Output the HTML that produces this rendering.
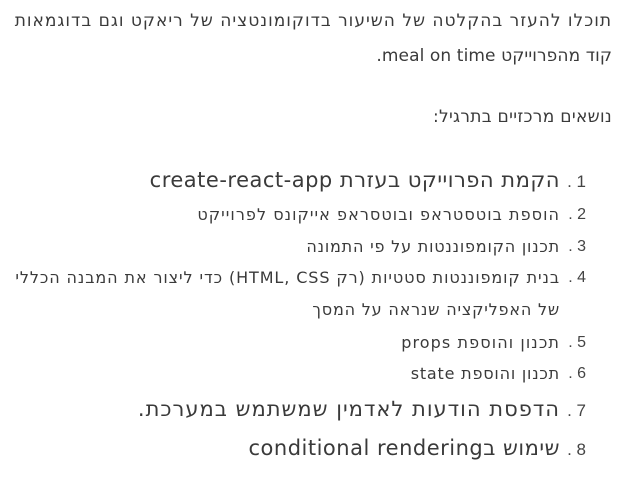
<!DOCTYPE html>
<html><head><meta charset="utf-8"><style>
body{margin:0;width:638px;height:486px;background:#fff;overflow:hidden;font-family:"DejaVu Sans","Liberation Sans",sans-serif;color:#3a3a3a;position:relative}
.l{position:absolute;direction:rtl;white-space:nowrap;line-height:1}
.p{right:26px;font-size:17px}
.n{position:absolute;right:52px;direction:ltr;white-space:nowrap;line-height:1;color:#444;font-family:"Liberation Sans",sans-serif}
.t{right:78px}
.s{font-size:16px;letter-spacing:0.8px}
</style></head><body>
<div class="l p" style="top:13px;letter-spacing:1px">תוכלו להעזר בהקלטה של השיעור בדוקומונטציה של ריאקט וגם בדוגמאות</div>
<div class="l p" style="top:48px;letter-spacing:0.1px">קוד מהפרוייקט meal on time.</div>
<div class="l p" style="top:109px;letter-spacing:0.3px">נושאים מרכזיים בתרגיל:</div>

<div class="n" style="top:173px;font-size:17px">. 1</div>
<div class="l t" style="top:170px;font-size:21px;letter-spacing:0.5px">הקמת הפרוייקט בעזרת create-react-app</div>
<div class="n" style="top:207px;font-size:16px">. 2</div>
<div class="l t s" style="top:207px;letter-spacing:1.05px">הוספת בוטסטראפ ובוטסראפ אייקונס לפרוייקט</div>
<div class="n" style="top:239px;font-size:16px">. 3</div>
<div class="l t s" style="top:239px">תכנון הקומפוננטות על פי התמונה</div>
<div class="n" style="top:270px;font-size:16px">. 4</div>
<div class="l t s" style="top:270px;letter-spacing:0.9px">בנית קומפוננטות סטטיות (רק HTML, CSS) כדי ליצור את המבנה הכללי</div>
<div class="l t s" style="top:302px">של האפליקציה שנראה על המסך</div>
<div class="n" style="top:335px;font-size:16px">. 5</div>
<div class="l t s" style="top:335px;letter-spacing:1.1px">תכנון והוספת props</div>
<div class="n" style="top:366px;font-size:16px">. 6</div>
<div class="l t s" style="top:366px">תכנון והוספת state</div>
<div class="n" style="top:402px;font-size:17px">. 7</div>
<div class="l t" style="top:399px;font-size:21px;letter-spacing:1px">הדפסת הודעות לאדמין שמשתמש במערכת.</div>
<div class="n" style="top:441px;font-size:17px">. 8</div>
<div class="l t" style="top:438px;font-size:21px;letter-spacing:0.5px">שימוש בconditional rendering</div>
</body></html>
